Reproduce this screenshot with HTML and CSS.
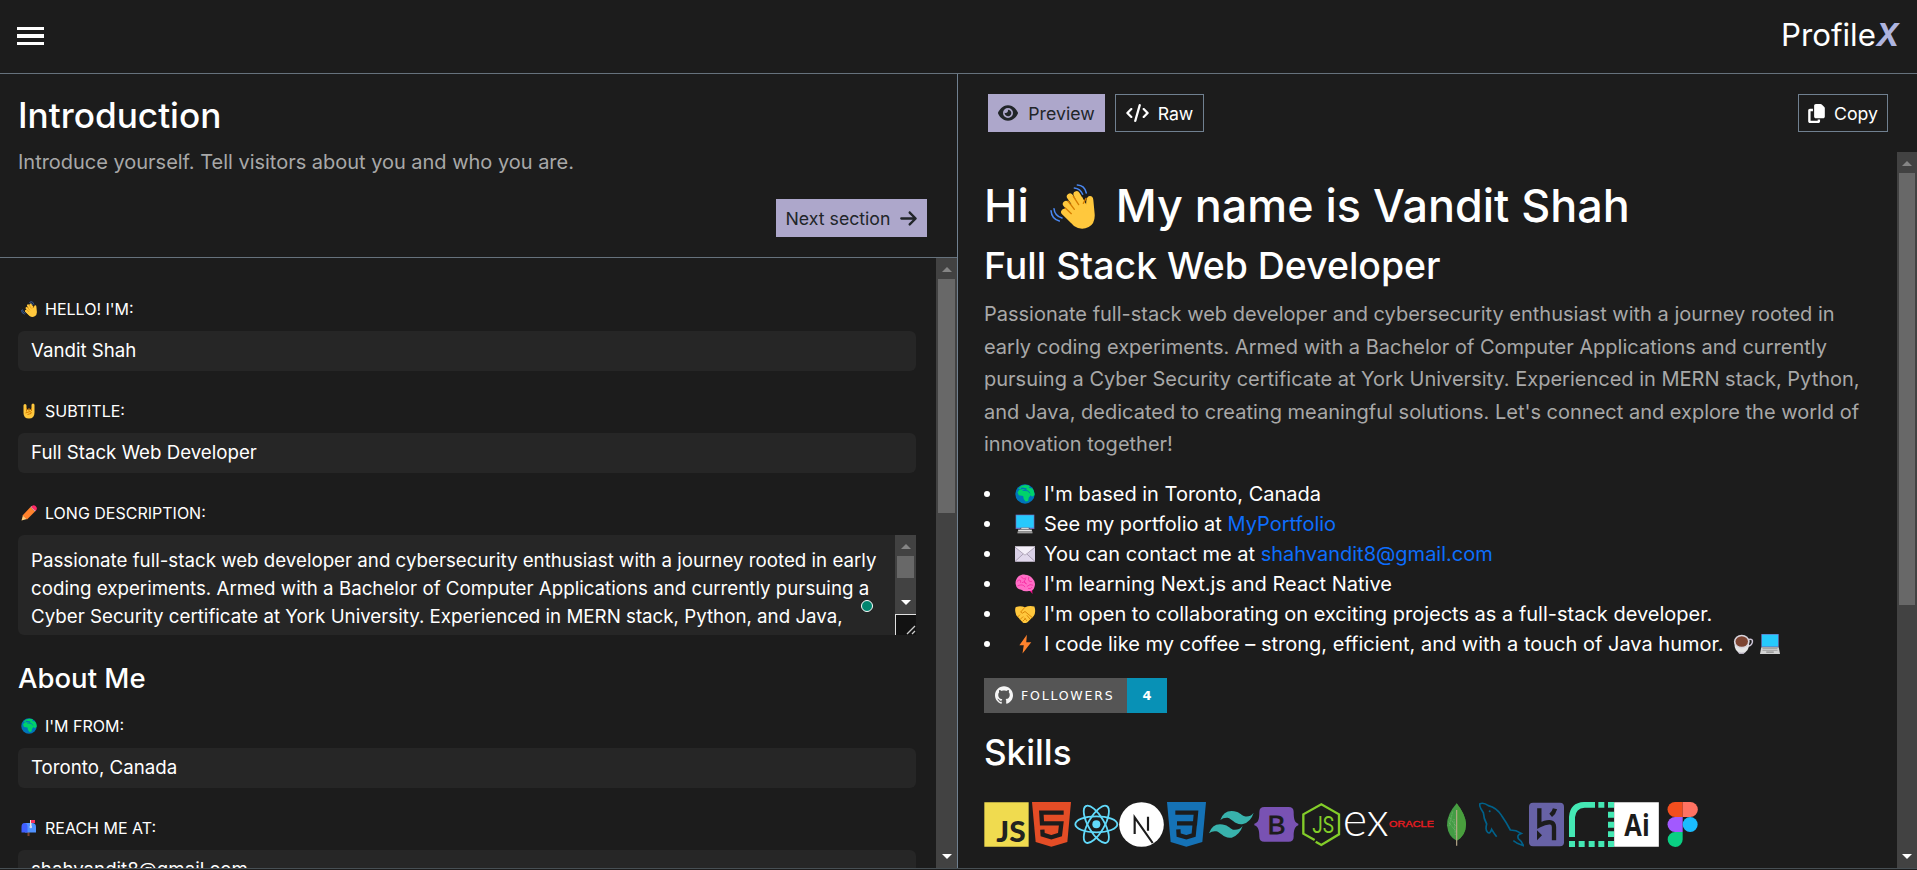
FILE: index.html
```html
<!DOCTYPE html>
<html lang="en">
<head>
<meta charset="utf-8">
<title>ProfileX</title>
<link rel="stylesheet" href="styles.css">
</head>
<body>
<svg class="defs" aria-hidden="true">
  <symbol id="wave" viewBox="238 70 135 135">
    <g fill="none" stroke="#4a87f0" stroke-width="4.5" stroke-linecap="round"><path d="M320 73Q342 74 347 97M311 82Q329 84 336 101M241 150Q243 175 266 181M250 144Q252 166 274 172"/></g>
    <path d="M276 148Q268 156 278 163L310 196Q332 211 354 199Q374 188 372 160L368 118Q367 106 358 106Q349 106 347 120L346 134L334 108Z" fill="#ffc83d"/>
    <g fill="none" stroke="#ffc83d" stroke-width="19" stroke-linecap="round"><path d="M318 101L342 142M298 108L328 150M286 130L318 164M281 154L306 178"/></g>
    <g fill="none" stroke="#d67d00" stroke-width="4" stroke-linecap="round"><path d="M308 107L324 132M292 121L311 146M284 142L302 159M346 113L338 128"/></g>
  </symbol>
  <symbol id="rock" viewBox="0 0 32 32">
    <path d="M5 5q0-3 3-3t3 3v8h10V4q0-3 3-3t3 3v15q0 12-11 12T5 20z" fill="#ffc83d"/>
    <path d="M11 10v7m5-7v6m5-6v6M9 20l9-3q4 1 2 4l-7 2" fill="none" stroke="#d67d00" stroke-width="2"/>
  </symbol>
  <symbol id="pencil" viewBox="0 0 32 32">
    <path d="M1 31l3-11 8 8z" fill="#ffce7c"/><path d="M3 21L19 4l9 9-16 16z" fill="#ff822d"/><path d="M19 4l2-2 9 9-2 2z" fill="#d3d3d3"/><path d="M21 3q4-4 8-1 5 4 1 9l-1 1-9-8z" fill="#ff2b66"/>
  </symbol>
  <symbol id="globe" viewBox="0 0 32 32">
    <circle cx="16" cy="16" r="15.5" fill="#0074ba"/>
    <path d="M7 5Q15-1 24 3L22 6l6 1q4 6 3 11-2 2-4 2l-2-2-3 4-1 5-4 1-3-4-1-5-7-1-2-5 3-4 6-1 5 2 1-3-5-1z" fill="#00d26a"/>
    <path d="M5 8q2-3 6-4l-2 4z" fill="#00d26a"/><path d="M12 10l9 1 3 4" fill="none" stroke="#0074ba" stroke-width="1.5"/>
  </symbol>
  <symbol id="mailbox" viewBox="0 0 32 32">
    <path d="M13 20h4v12h-4z" fill="#7d4533"/><path d="M8 6h14q8 0 8 8v11H8z" fill="#5092ff"/><path d="M1 25V14q0-8 6-8t6 8v11z" fill="#3f5fff"/><path d="M18 0h3v15h-3z" fill="#e6e6e6"/><path d="M20 0h8v6h-8z" fill="#f8315f"/><circle cx="19.500" cy="14" r="2.500" fill="#d8d8ee"/>
  </symbol>
  <symbol id="desktop" viewBox="0 0 32 32">
    <path d="M1 1h30v23H1z" fill="#7068b8"/><path d="M2 2h28v20H2z" fill="#26c9fc"/><path d="M9 22h14l1 4H8z" fill="#4a4a55"/><path d="M5 25h22v3H5z" fill="#e6e6e6"/><path d="M4 28h24v3H4z" fill="#9b9b9b"/><path d="M10 23h12" stroke="#d3d3d3" stroke-width="2"/>
  </symbol>
  <symbol id="mail" viewBox="0 0 32 32">
    <path d="M0 4h32v24H0z" fill="#d8cfe5"/><path d="M0 28l13-12h6l13 12z" fill="#e1d8ec"/><path d="M0 5l16 14L32 5v-1H0z" fill="#f3eef8"/><path d="M0 5l16 13L32 5M0 28l13-12m19 12L19 16" fill="none" stroke="#998ea4" stroke-width="1.200"/>
  </symbol>
  <symbol id="brain" viewBox="0 0 32 32">
    <path d="M20 20h7l1 12-5-6z" fill="#f70a8d"/><path d="M16 1C6 0 0 8 1 16q1 8 9 9 5 4 12 2 7 1 9-6 3-8-3-14Q23 1 16 1z" fill="#ff6dc6"/>
    <path d="M3 12q7-6 6 2m1-10q3 6 8 2m-1 2q-5 6 2 8m3-11q-2 8 5 7M4 19q9-4 12 2m3-1q5-5 10-2M11 14q5-3 6 1M21 23q5 2 6-2" fill="none" stroke="#f72aa0" stroke-width="1.300"/>
  </symbol>
  <symbol id="shake" viewBox="0 0 32 32">
    <path d="M1 5q7-3 15 0 7-3 15-1 3 9-1 15L20 29q-5 3-8 0L2 18Q-1 10 1 5z" fill="#ffc83d"/>
    <path d="M16 5l-7 8q2 4 7-1l12 10M8 17l-4 4m9-1l-5 5m9-2l-5 5m7-10l5 6m-9-2l4 5" fill="none" stroke="#d67d00" stroke-width="1.400"/>
  </symbol>
  <symbol id="bolt" viewBox="0 0 32 32"><path d="M19 1L7 18h7l-2 13 14-18h-8z" fill="#ff822d"/></symbol>
  <symbol id="coffee" viewBox="0 0 32 32">
    <path d="M25 9q7-2 6 4-2 7-8 6" fill="none" stroke="#cdc4d6" stroke-width="2.500"/><path d="M2 12q0 19 12 19t12-19z" fill="#e6e6e6"/><path d="M7 28q7 4 13 0l-3 4h-7z" fill="#b4acbc"/><ellipse cx="14" cy="12" rx="12.500" ry="11" fill="#d8d4dc"/><ellipse cx="14" cy="12" rx="10" ry="8.500" fill="#7d4533"/>
  </symbol>
  <symbol id="laptop" viewBox="0 0 32 32">
    <path d="M2 0h28v21H2z" fill="#7068b8"/><path d="M3 1h26v19H3z" fill="#26c9fc"/><path d="M2 21h28l2 11H0z" fill="#d3d3d3"/><path d="M4 23h24m-24 3h24" stroke="#9b9b9b" stroke-width="1.500"/><path d="M10 28h12v2H10z" fill="#8b8b8b"/>
  </symbol>
</svg>

<div class="app">
  <header class="topbar">
    <button class="menu" aria-label="Menu"><i></i><i></i><i></i></button>
    <div class="brand">Profile<span class="brand-x">X</span></div>
  </header>

  <main class="panes">
    <section class="editor">
      <div class="intro">
        <h1 class="intro-title">Introduction</h1>
        <p class="intro-sub">Introduce yourself. Tell visitors about you and who you are.</p>
        <button class="btn btn-fill next">Next section
          <svg class="ic-arrow" viewBox="0 0 448 512"><path fill="currentColor" d="M438.6 278.600c12.500-12.500 12.500-32.800 0-45.300l-160-160c-12.500-12.500-32.800-12.500-45.300 0s-12.500 32.800 0 45.300L338.800 224 32 224c-17.700 0-32 14.300-32 32s14.300 32 32 32l306.700 0L233.400 393.400c-12.500 12.500-12.500 32.800 0 45.300s32.800 12.500 45.300 0l160-160z"/></svg>
        </button>
      </div>
      <div class="editor-scroll">
        <div class="form">
          <div class="field"><label class="label"><svg class="emo-s"><use href="#wave"/></svg>HELLO! I'M:</label><div class="input">Vandit Shah</div></div>
          <div class="field"><label class="label"><svg class="emo-s"><use href="#rock"/></svg>SUBTITLE:</label><div class="input">Full Stack Web Developer</div></div>
          <div class="field"><label class="label"><svg class="emo-s"><use href="#pencil"/></svg>LONG DESCRIPTION:</label>
            <div class="area">
              <div class="area-text">Passionate full-stack web developer and cybersecurity enthusiast with a journey rooted in early<br>coding experiments. Armed with a Bachelor of Computer Applications and currently pursuing a<br>Cyber Security certificate at York University. Experienced in MERN stack, Python, and Java,</div>
              <div class="area-side">
                <div class="bar bar-area"><span class="up"></span><span class="thumb"></span><span class="down"></span></div>
                <div class="grip"><svg viewBox="0 0 20 20"><path d="M11 19l8-8M16 19l3-3" stroke="#ccc" stroke-width="1.300" fill="none"/></svg></div>
              </div>
              <span class="dot"></span>
            </div>
          </div>
          <h2 class="about">About Me</h2>
          <div class="field"><label class="label"><svg class="emo-s"><use href="#globe"/></svg>I'M FROM:</label><div class="input">Toronto, Canada</div></div>
          <div class="field"><label class="label"><svg class="emo-s"><use href="#mailbox"/></svg>REACH ME AT:</label><div class="input">shahvandit8@gmail.com</div></div>
        </div>
        <div class="bar bar-left"><span class="up"></span><span class="thumb"></span><span class="down"></span></div>
      </div>
    </section>

    <section class="preview">
      <div class="tools">
        <button class="btn btn-fill b-preview"><svg class="ic-eye" viewBox="0 0 576 512"><path fill="currentColor" d="M288 32c-80.800 0-145.500 36.800-192.600 80.600C48.600 156 17.300 208 2.500 243.700c-3.300 7.900-3.300 16.700 0 24.600C17.300 304 48.600 356 95.400 399.400C142.500 443.200 207.200 480 288 480s145.500-36.800 192.600-80.600c46.800-43.500 78.100-95.400 93-131.100c3.300-7.900 3.300-16.700 0-24.600c-14.900-35.700-46.200-87.700-93-131.100C433.500 68.800 368.800 32 288 32zM144 256a144 144 0 1 1 288 0 144 144 0 1 1 -288 0zm144-64c0 35.300-28.700 64-64 64c-7.100 0-13.900-1.200-20.300-3.300c-5.500-1.800-11.900 1.600-11.700 7.400c.3 6.900 1.300 13.800 3.200 20.700c13.700 51.200 66.400 81.600 117.600 67.900s81.600-66.400 67.900-117.600c-11.100-41.500-47.800-69.400-88.600-71.100c-5.800-.2-9.200 6.100-7.400 11.700c2.100 6.400 3.300 13.200 3.300 20.300z"/></svg>Preview</button>
        <button class="btn btn-line b-raw"><svg class="ic-code" viewBox="0 0 640 512"><path fill="currentColor" d="M392.800 1.200c-17-4.900-34.700 5-39.600 22l-128 448c-4.900 17 5 34.700 22 39.600s34.700-5 39.600-22l128-448c4.900-17-5-34.700-22-39.600zm80.600 120.100c-12.500 12.500-12.500 32.800 0 45.300L562.700 256l-89.400 89.400c-12.500 12.500-12.500 32.800 0 45.300s32.800 12.500 45.300 0l112-112c12.500-12.500 12.500-32.800 0-45.300l-112-112c-12.500-12.500-32.800-12.500-45.300 0zm-306.700 0c-12.500-12.500-32.800-12.500-45.300 0l-112 112c-12.500 12.500-12.500 32.800 0 45.300l112 112c12.500 12.500 32.800 12.500 45.300 0s12.500-32.800 0-45.300L77.300 256l89.400-89.400c12.500-12.500 12.500-32.800 0-45.300z"/></svg>Raw</button>
        <button class="btn btn-line b-copy"><svg class="ic-copy" viewBox="0 0 448 512"><path fill="currentColor" d="M208 0H332.100c12.700 0 24.900 5.100 33.900 14.100l67.900 67.900c9 9 14.100 21.200 14.100 33.900V336c0 26.500-21.500 48-48 48H208c-26.500 0-48-21.500-48-48V48c0-26.500 21.500-48 48-48zM48 128h80v64H64V448H256V416h64v48c0 26.500-21.500 48-48 48H48c-26.500 0-48-21.500-48-48V176c0-26.500 21.500-48 48-48z"/></svg>Copy</button>
      </div>
      <div class="preview-scroll">
        <article class="doc">
          <h1 class="name"><span>Hi</span><svg class="emo-l"><use href="#wave"/></svg><span>My name is Vandit Shah</span></h1>
          <h2 class="role">Full Stack Web Developer</h2>
          <p class="bio">Passionate full-stack web developer and cybersecurity enthusiast with a journey rooted in<br>early coding experiments. Armed with a Bachelor of Computer Applications and currently<br>pursuing a Cyber Security certificate at York University. Experienced in MERN stack, Python,<br>and Java, dedicated to creating meaningful solutions. Let's connect and explore the world of<br>innovation together!</p>
          <ul class="facts">
            <li><svg class="emo"><use href="#globe"/></svg><span>I'm based in Toronto, Canada</span></li>
            <li><svg class="emo"><use href="#desktop"/></svg><span>See my portfolio at <a>MyPortfolio</a></span></li>
            <li><svg class="emo"><use href="#mail"/></svg><span>You can contact me at <a>shahvandit8@gmail.com</a></span></li>
            <li><svg class="emo"><use href="#brain"/></svg><span>I'm learning Next.js and React Native</span></li>
            <li><svg class="emo"><use href="#shake"/></svg><span>I'm open to collaborating on exciting projects as a full-stack developer.</span></li>
            <li><svg class="emo"><use href="#bolt"/></svg><span>I code like my coffee – strong, efficient, and with a touch of Java humor.</span><svg class="emo tail-a"><use href="#coffee"/></svg><svg class="emo tail-b"><use href="#laptop"/></svg></li>
          </ul>
          <div class="badge">
            <span class="badge-l"><svg viewBox="0 0 24 24"><path fill="#f5f5f5" d="M12 .297c-6.630 0-12 5.373-12 12 0 5.303 3.438 9.800 8.205 11.385.6.113.82-.258.82-.577 0-.285-.01-1.040-.015-2.040-3.338.724-4.042-1.610-4.042-1.610C4.422 18.070 3.633 17.700 3.633 17.700c-1.087-.744.084-.729.084-.729 1.205.084 1.838 1.236 1.838 1.236 1.070 1.835 2.809 1.305 3.495.998.108-.776.417-1.305.76-1.605-2.665-.3-5.466-1.332-5.466-5.930 0-1.310.465-2.380 1.235-3.220-.135-.303-.54-1.523.105-3.176 0 0 1.005-.322 3.300 1.230.96-.267 1.980-.399 3-.405 1.020.006 2.040.138 3 .405 2.280-1.552 3.285-1.230 3.285-1.230.645 1.653.24 2.873.12 3.176.765.84 1.230 1.910 1.230 3.220 0 4.610-2.805 5.625-5.475 5.920.42.36.81 1.096.81 2.220 0 1.606-.015 2.896-.015 3.286 0 .315.21.69.825.57C20.565 22.092 24 17.592 24 12.297c0-6.627-5.373-12-12-12"/></svg><span>FOLLOWERS</span></span><span class="badge-r">4</span>
          </div>
          <h2 class="skills-title">Skills</h2>
          <div class="skills">
            <svg viewBox="42 66 135 135"><path fill="#f0db4f" d="M43 67h133v133H43z"/><text x="79" y="187" textLength="88" lengthAdjust="spacingAndGlyphs" font-family="Lato" font-weight="900" font-size="84" fill="#222220">JS</text></svg>
            <svg viewBox="177 66 135 135"><path fill="#e44d26" d="M186 66h117l-11 120-48 14-47-14z"/><path d="M281 98H214l2 32h58l-4 34-26 8-26-8-1-15" fill="none" stroke="#1c1c1c" stroke-width="13"/></svg>
            <svg viewBox="312 66 135 135"><circle cx="379" cy="133" r="12" fill="#61dafb"/><g fill="none" stroke="#61dafb" stroke-width="5.500"><ellipse cx="379" cy="133" rx="63" ry="24"/><ellipse cx="379" cy="133" rx="63" ry="24" transform="rotate(60 379 133)"/><ellipse cx="379" cy="133" rx="63" ry="24" transform="rotate(120 379 133)"/></g></svg>
            <svg viewBox="447 66 135 135"><circle cx="514.500" cy="133.500" r="67" fill="#fff"/><path d="M494 162V112L548 189M534 110V152" fill="none" stroke="#1c1c1c" stroke-width="6.500"/></svg>
            <svg viewBox="582 66 135 135"><path fill="#1572b6" d="M591 66h117l-11 120-48 14-47-14z"/><path d="M616 98H678L675 130H621M675 124L671 165 649 172 626 165 625 148" fill="none" stroke="#1c1c1c" stroke-width="13"/></svg>
            <svg viewBox="717 66 135 135"><path fill="#38b2ac" d="M751 120Q760 93 785 93c22 0 27 12 39 16q16 3 27-11-8 27-32 34c-24 4-32-16-46-19q-13-1-22 7zM717 160q9-27 33-27c23 0 28 12 39 16q17 3 29-11-9 27-33 35c-24 4-32-16-46-19q-12-2-22 6z"/></svg>
            <svg viewBox="852 66 135 135"><path fill="#7952b3" d="M883 81h73q15 0 15 15c0 24 4 32 14 35v5c-10 4-14 12-14 34q0 15-15 15h-73q-15 0-15-15c0-22-4-30-15-34v-5c11-3 15-11 15-35q0-15 15-15z"/><text x="893" y="161" textLength="53" lengthAdjust="spacingAndGlyphs" font-family="Liberation Sans" font-size="75" font-weight="400" stroke="#1c1c1c" stroke-width="2.500" fill="#1c1c1c">B</text></svg>
            <svg viewBox="987 66 135 135"><path d="M1034 180L1000 161V103L1054 73 1107 103V163L1054 195 1037 185" fill="none" stroke="#83cd29" stroke-width="7"/><text x="1027" y="159" textLength="65" lengthAdjust="spacingAndGlyphs" font-family="Roboto" font-weight="400" font-size="72" fill="#83cd29">JS</text></svg>
            <svg viewBox="42 66 135 135"><text x="38" y="169" textLength="138" lengthAdjust="spacingAndGlyphs" font-family="Lato" font-weight="300" font-size="143" fill="#fff">ex</text></svg>
            <svg viewBox="177 66 135 135"><text x="177" y="142" textLength="135" lengthAdjust="spacingAndGlyphs" font-family="Liberation Sans" font-size="26" fill="#ea1b22" stroke="#ea1b22">ORACLE</text></svg>
            <svg viewBox="312 66 135 135"><path d="M380 70Q350 104 351 136q4 36 29 46Q407 168 408 132 407 105 380 70z" fill="#449c45"/><path d="M380 70Q407 105 408 132 407 168 380 182z" fill="#499f3d"/><path d="M380 90V197" stroke="#b8a98a" stroke-width="3.500"/><path d="M355 125l23 30m-20-44l19 27m-9-43l-10 42m14-20l4 50" stroke="#8fc588" stroke-width="1.500" stroke-dasharray="3 2"/></svg>
            <svg viewBox="447 66 135 135"><path d="M500 170Q492 160 485 148 480 163 473 157 465 151 470 132 461 115 460 98 446 78 450 71 462 67 475 77 500 83 515 107 528 125 541 150 558 150 574 160 560 164 565 176 574 182 580 197L562 190 550 182" fill="none" stroke="#00618a" stroke-width="5"/><circle cx="479" cy="94" r="3" fill="#00618a"/></svg>
            <svg viewBox="582 66 135 135"><rect x="597" y="68" width="105" height="131" rx="12" fill="#6762a6"/><path d="M628 85V136Q648 125 662 127 672 129 672 141V181M675 86Q672 98 662 106" fill="none" stroke="#1c1c1c" stroke-width="13"/><path d="M621 151l15 15-15 15z" fill="#1c1c1c"/></svg>
            <svg viewBox="717 66 135 135"><g fill="#44e8b4"><path d="M717 171V110Q720 68 762 66H795V83H764Q737 85 735 112V171zM717 183h18v18h-18zM746 183h18v18h-18zM776 183h18v18h-18zM805 183h18v18h-18zM805 66h18v17h-18zM834 66h18v17h-18zM834 95h18v18h-18zM834 125h18v18h-18zM834 154h18v17h-18zM834 183h18v18h-18z"/></g></svg>
            <svg viewBox="852 66 135 135"><path d="M852.500 67h134v133h-134z" fill="#fff"/><text x="883" y="167" textLength="76" lengthAdjust="spacingAndGlyphs" font-family="Open Sans" font-weight="700" font-size="89" fill="#1c1c1c">Ai</text></svg>
            <svg viewBox="987 66 135 135"><path d="M1035 66h23v45h-23a22.500 22.500 0 0 1 0-45z" fill="#f24e1e"/><path d="M1058 66h23a22.500 22.500 0 0 1 0 45h-23z" fill="#ff7262"/><path d="M1035 111h23v45h-23a22.500 22.500 0 0 1 0-45z" fill="#a259ff"/><circle cx="1080.500" cy="133.500" r="22.500" fill="#1abcfe"/><path d="M1035 156h23v22.500a22.500 22.500 0 1 1-23-22.500z" fill="#0acf83"/></svg>
          </div>
        </article>
        <div class="bar bar-right"><span class="up"></span><span class="thumb"></span><span class="down"></span></div>
      </div>
    </section>
  </main>
</div>
</body>
</html>
```
FILE: styles.css
```css
* { box-sizing: border-box; margin: 0; padding: 0; }
body {
  width: 1917px;
  height: 870px;
  overflow: hidden;
  background: #1c1c1c;
  color: #fff;
  font-family: Inter, "Open Sans", sans-serif;
}
button { font: inherit; color: inherit; background: none; border: 0; }
h1, h2 { font-weight: 500; white-space: nowrap; }
svg { display: block; flex: none; }
.defs { position: absolute; width: 0; height: 0; }

.app { display: flex; flex-direction: column; height: 869px; border-bottom: 1px solid #474f54; }
.topbar {
  display: flex; justify-content: space-between; align-items: center;
  height: 74px; padding: 0 18px 4px 17px; border-bottom: 1px solid #66727d;
}
.menu { display: flex; flex-direction: column; gap: 4px; width: 27px; padding-top: 2px; }
.menu i { height: 3px; background: #fff; }
.menu i:nth-child(2) { height: 4px; }
.brand { font-size: 31.250px; line-height: 40px; }
.brand-x { font-weight: 700; font-style: italic; color: #aeb4df; }

.panes { flex: 1; display: flex; min-height: 0; }
.editor { display: flex; flex-direction: column; width: 958px; border-right: 1px solid #708090; }
.intro { display: flex; flex-direction: column; height: 184px; padding: 19px 30px 0 18px; border-bottom: 1px solid #66727d; }
.intro-title { font-size: 35.200px; line-height: 44px; }
.intro-sub { margin-top: 13px; font-size: 20px; letter-spacing: -0.02px; line-height: 24px; color: #a8a8a8; white-space: nowrap; }
.next { align-self: flex-end; margin-top: 25px; width: 151px; gap: 10px; }

.btn { display: flex; align-items: center; justify-content: center; height: 38px; font-size: 17.700px; white-space: nowrap; }
.btn-fill { background: #ada7cb; color: #212529; }
.btn-line { border: 1px solid #708090; }
.ic-arrow { width: 17px; height: 19px; }
.ic-eye { width: 20px; height: 18px; }
.ic-code { width: 23px; height: 18px; }
.ic-copy { width: 17px; height: 19px; }

.editor-scroll, .preview-scroll { flex: 1; display: flex; min-height: 0; overflow: hidden; }
.form { flex: 1; padding: 39px 20px 0 18px; height: 610px; overflow: hidden; }
.field { margin-bottom: 28px; }
.label { display: flex; align-items: center; gap: 8px; height: 24px; margin-bottom: 10px; padding-left: 3px; font-size: 16px; white-space: nowrap; }
.emo-s { width: 16px; height: 16px; }
.input { height: 40px; padding-left: 13px; border-radius: 6px; background: #262626; font-size: 18.700px; line-height: 40px; white-space: nowrap; }
.area { position: relative; display: flex; height: 100px; border-radius: 6px 0 0 6px; background: #262626; overflow: hidden; }
.area-text { flex: 1; padding: 12px 0 0 13px; font-size: 18.730px; line-height: 28px; white-space: nowrap; overflow: hidden; }
.area-side { width: 21px; }
.grip { height: 21px; border: solid #e0e0e0; border-width: 1px 0 0 1px; background: #121212; }
.dot { position: absolute; left: 843px; top: 65px; width: 12px; height: 12px; border-radius: 50%; border: 1px solid #fff; background: #00856f; }
.about { margin: -5px 0 16px; font-size: 27.500px; line-height: 40px; }

.bar { display: flex; flex-direction: column; align-items: center; width: 21px; background: #424242; }
.bar .up { width: 0; height: 0; margin: 9px 0 7px; border: solid transparent; border-width: 0 5px 5px; border-bottom-color: #858585; }
.bar .thumb { width: 17px; background: #686868; }
.bar .down { width: 0; height: 0; margin: auto 0 9px; border: solid transparent; border-width: 5px 5px 0; border-top-color: #fff; }
.bar-left .thumb { height: 234px; }
.bar-right { width: 20px; }
.bar-right .thumb { width: 16px; height: 432px; }
.bar-area { height: 79px; }
.bar-area .thumb { height: 22px; }

.preview { flex: 1; display: flex; flex-direction: column; }
.tools { display: flex; height: 78px; padding: 20px 29px 0 30px; gap: 10px; }
.b-preview { width: 117px; gap: 10px; }
.b-raw { width: 89px; gap: 9px; }
.b-copy { width: 90px; gap: 9px; margin-left: auto; }
.doc { flex: 1; padding: 26px 0 0 26px; height: 716px; overflow: hidden; }
.name { display: flex; align-items: center; font-size: 44.900px; line-height: 56px; }
.emo-l { width: 45px; height: 45px; margin: 0 21px 0 21px; }
.role { margin-top: 9px; font-size: 37.450px; line-height: 46px; }
.bio { margin-top: 9px; font-size: 20px; line-height: 32.500px; color: #a8a8a8; white-space: nowrap; }
.facts { list-style: none; margin-top: 18px; font-size: 20px; }
.facts li { display: flex; align-items: center; height: 30px; white-space: nowrap; }
.facts li::before { content: ""; width: 6px; height: 6px; margin: 1px 24px 0 0; border-radius: 50%; background: #fff; }
.facts a { color: #0d6efd; }
.emo { width: 22px; height: 20px; margin-right: 8px; }
.tail-a { margin: 0 5px 0 8px; }
.tail-b { margin: 0; }
.badge { display: flex; width: 183px; height: 35px; margin-top: 19px; font-family: Verdana, "DejaVu Sans", sans-serif; font-size: 12.500px; line-height: 35px; }
.badge-l { display: flex; align-items: center; width: 143px; padding-left: 11px; gap: 8px; background: #555; letter-spacing: 1.800px; }
.badge-l svg { width: 18px; height: 18px; }
.badge-r { flex: 1; background: #0891b6; text-align: center; font-size: 13px; font-weight: 700; }
.skills-title { margin-top: 17px; font-size: 35px; line-height: 44px; }
.skills { display: flex; margin-top: 28px; }
.skills svg { width: 45px; height: 45px; }
```
